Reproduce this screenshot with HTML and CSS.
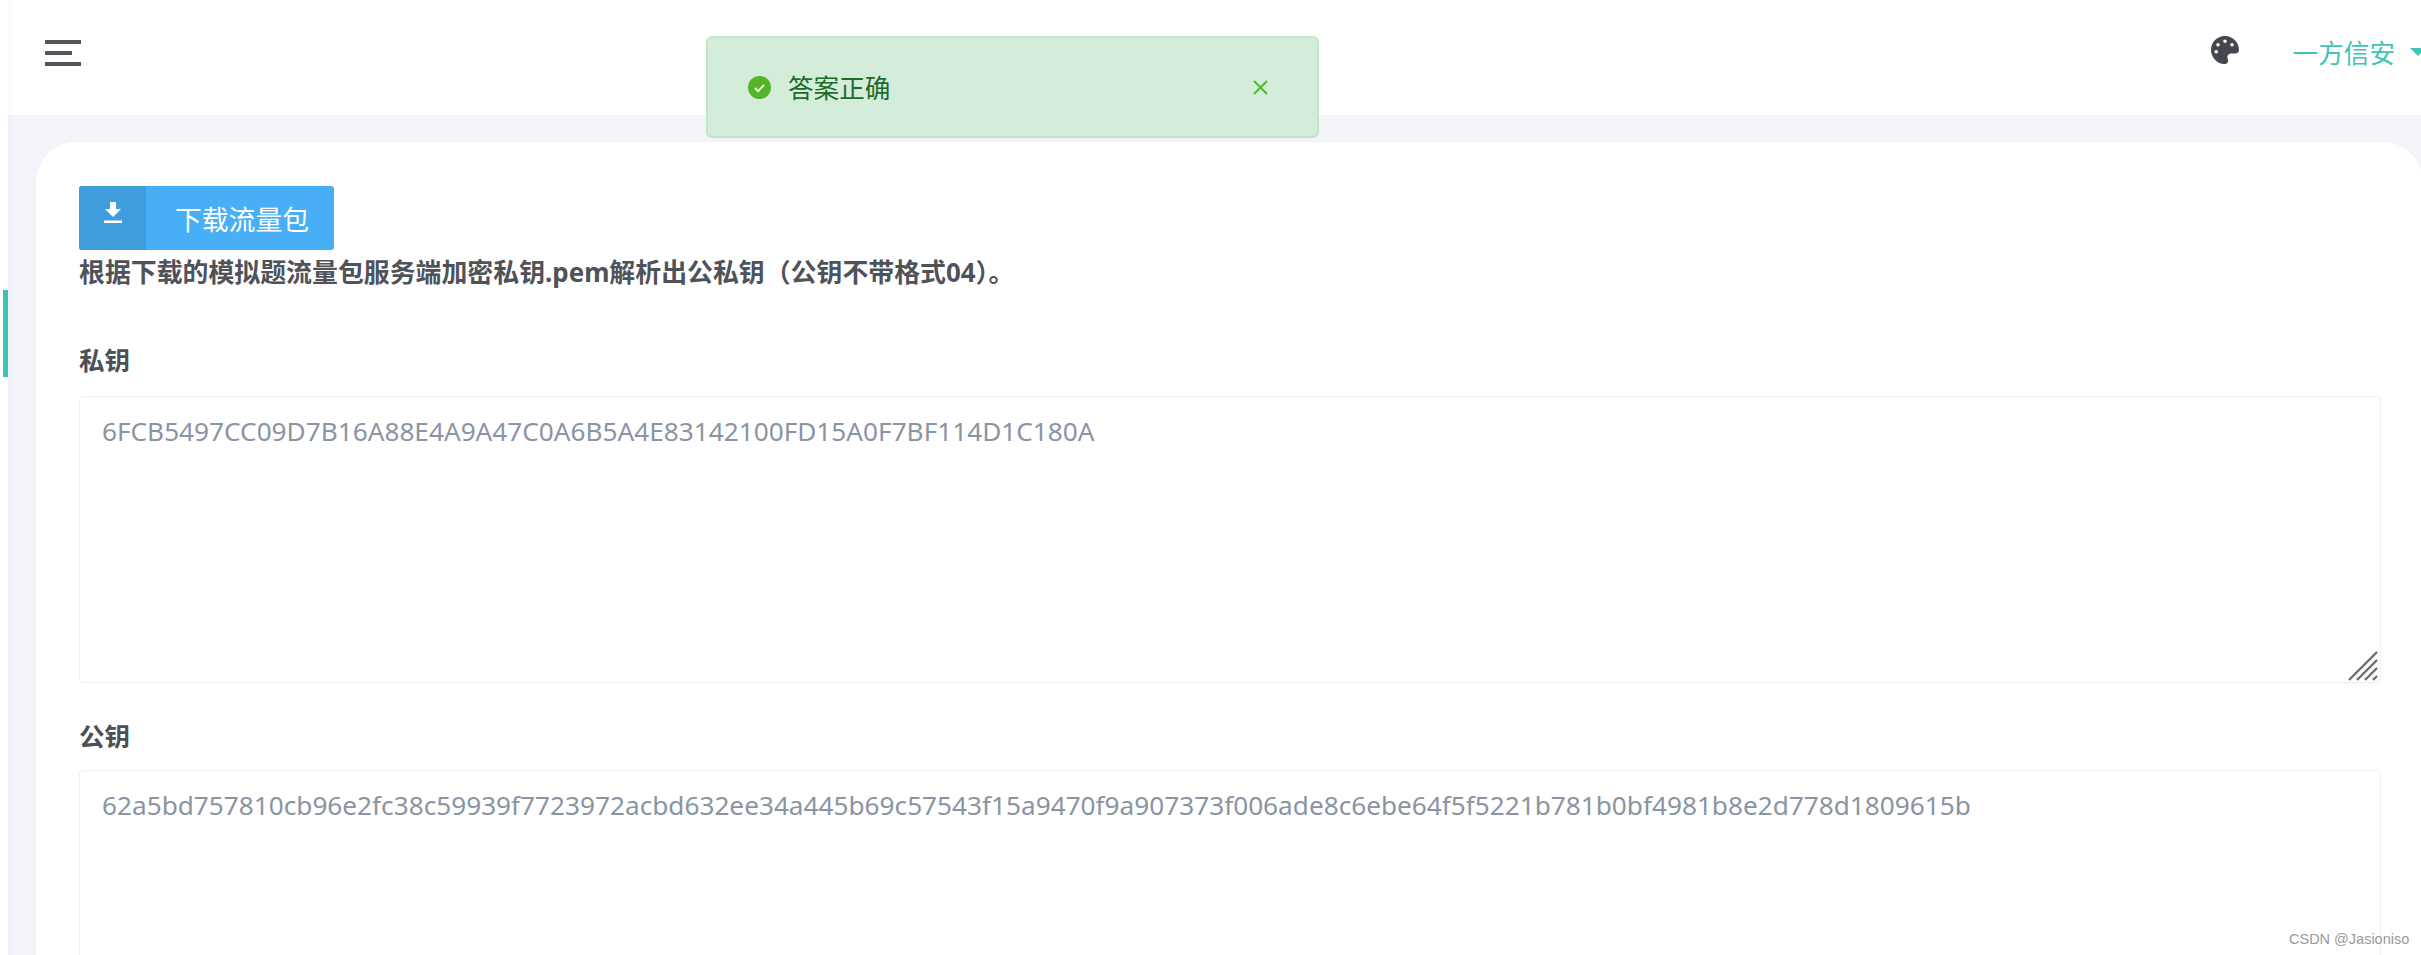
FILE: index.html
```html
<!DOCTYPE html>
<html lang="zh-CN">
<head>
    <meta charset="UTF-8">
    <meta name="viewport" content="width=device-width, initial-scale=1.0">
    <title>模拟题</title>
    <link rel="stylesheet" href="styles.css">
</head>
<body>
    <div class="app">
        <!-- collapsed sidebar -->
        <aside class="sidebar"><div class="sidebar-mark"></div></aside>

        <div class="main">
            <header class="topbar">
                <button type="button" class="hamburger" aria-label="menu">
                    <span></span>
                    <span class="short"></span>
                    <span></span>
                </button>
                <div class="topbar-right">
                    <svg class="palette" viewBox="0 0 512 512"><path d="M204.3 5C104.9 24.4 24.8 104.3 5.2 203.4c-37 187 131.7 326.4 258.8 306.7 41.2-6.4 61.4-54.6 42.5-91.7-23.1-45.4 9.9-98.4 60.9-98.4h79.7c35.8 0 64.8-29.6 64.9-65.3C511.5 97.1 368.1-26.9 204.3 5zM96 320c-17.7 0-32-14.3-32-32s14.3-32 32-32 32 14.3 32 32-14.3 32-32 32zm32-128c-17.7 0-32-14.3-32-32s14.3-32 32-32 32 14.3 32 32-14.3 32-32 32zm128-64c-17.7 0-32-14.3-32-32s14.3-32 32-32 32 14.3 32 32-14.3 32-32 32zm128 64c-17.7 0-32-14.3-32-32s14.3-32 32-32 32 14.3 32 32-14.3 32-32 32z"/></svg>
                    <span class="username">一方信安</span>
                    <span class="caret"></span>
                </div>
            </header>

            <div class="content">
                <section class="card">
                    <button type="button" class="download-btn">
                        <span class="download-icon">
                            <svg viewBox="0 0 18 21" width="18" height="21"><path d="M6 0h6v7h5l-8 8-8-8h5z"/><rect x="0" y="18.5" width="18" height="2.5"/></svg>
                        </span>
                        <span class="download-text">下载流量包</span>
                    </button>
                    <p class="question">根据下载的模拟题流量包服务端加密私钥.pem解析出公私钥（公钥不带格式04）。</p>

                    <label class="field-label first">私钥</label>
                    <div class="field">
                        <textarea class="field-input" spellcheck="false">6FCB5497CC09D7B16A88E4A9A47C0A6B5A4E83142100FD15A0F7BF114D1C180A</textarea>
                        <svg class="grip" viewBox="0 0 30 30" width="30" height="30"><path d="M1 29 29 1M9 29 29 9M17 29 29 17M25 29l4-4"/></svg>
                    </div>

                    <label class="field-label">公钥</label>
                    <div class="field">
                        <textarea class="field-input" spellcheck="false">62a5bd757810cb96e2fc38c59939f7723972acbd632ee34a445b69c57543f15a9470f9a907373f006ade8c6ebe64f5f5221b781b0bf4981b8e2d778d1809615b</textarea>
                    </div>
                </section>
            </div>
        </div>
    </div>

    <!-- message toast -->
    <div class="toast">
        <svg class="toast-icon" viewBox="0 0 23 23" width="23" height="23"><circle cx="11.5" cy="11.5" r="11.5"/><path d="M6.8 11.8l3.3 3.3 6-6.2"/></svg>
        <span class="toast-text">答案正确</span>
        <svg class="toast-close" viewBox="0 0 15 15" width="15" height="15"><path d="M1 1l13 13M14 1 1 14"/></svg>
    </div>

    <div class="watermark">CSDN @Jasioniso</div>
</body>
</html>
```

FILE: styles.css
```css
html, body { margin: 0; height: 955px; overflow: hidden; background: #fff; }
body { font-family: "Noto Sans", "Noto Sans CJK SC", sans-serif; color: #4b4f56; }
p { margin: 0; }

.app { display: flex; height: 955px; overflow: hidden; }

.sidebar { flex: 0 0 8px; box-sizing: border-box; padding: 290px 0 0 3px; background: #fff; box-shadow: 1px 0 4px rgba(0, 21, 41, .03); z-index: 1; }
.sidebar-mark { width: 5px; height: 87px; background: #3cc4b3; }

.main { flex: 1; min-width: 0; display: flex; flex-direction: column; }

.topbar { flex: 0 0 115px; box-sizing: border-box; display: flex; justify-content: space-between; background: #fff; }
.hamburger { display: flex; flex-direction: column; justify-content: space-between; width: 36px; height: 26px; margin: 40px 0 0 37px; padding: 0; background: none; border: none; }
.hamburger span { display: block; width: 36px; height: 4px; background: #53575c; }
.hamburger .short { width: 27px; }

.topbar-right { display: flex; align-items: flex-start; margin-right: -5px; }
.palette { width: 28px; height: 28px; margin-top: 36px; fill: #44474e; }
.username { margin: 34px 0 0 54px; font-size: 25.6px; line-height: 40px; color: #3fc3b3; }
.caret { margin: 48px 0 0 15px; border-left: 8px solid transparent; border-right: 8px solid transparent; border-top: 8px solid #3fc3b3; }

.content { flex: 1; min-height: 0; overflow: hidden; background: #f2f4f9; padding: 27px 0 0 28px; }

.card { box-sizing: border-box; height: 100%; overflow: hidden; margin-right: -2px; padding: 44px 42px 0 43px; background: #fff; border-radius: 40px 40px 0 0; }

.download-btn { display: flex; width: 255px; height: 64px; padding: 0; background: #48aff6; border: none; border-radius: 3px; color: #fff; overflow: hidden; font-family: inherit; }
.download-icon { flex: 0 0 67px; height: 64px; box-sizing: border-box; padding-top: 16px; background: #3f9ddd; text-align: center; }
.download-icon svg { fill: #fff; }
.download-text { margin-left: 29px; font-size: 26.8px; line-height: 68px; }

.question { font-size: 25.9px; font-weight: 700; line-height: 44px; color: #4f5359; }

.field-label { display: block; margin: 31px 0 12px; font-size: 25.5px; font-weight: 700; line-height: 44px; }
.field-label.first { margin: 44px 0 14px; }

.field { position: relative; height: 287px; }
.field-input { display: block; box-sizing: border-box; width: 100%; height: 100%; padding: 12px 22px; border: 1px solid #f0f0f1; border-radius: 4px; outline: none; resize: none; font-family: inherit; font-size: 26.2px; line-height: 44px; color: #8a94a3; background: #fff; }

.grip { position: absolute; right: 3px; bottom: 2px; fill: none; stroke: #6e6e6e; stroke-width: 2.4; }

.toast { position: absolute; left: 706px; top: 36px; box-sizing: border-box; width: 613px; height: 102px; display: flex; align-items: center; padding: 0 49px 0 40px; background: #d4ecda; border: 2px solid #c1e5c7; border-radius: 6px; }
.toast-icon circle { fill: #52b52a; }
.toast-icon path { fill: none; stroke: #fff; stroke-width: 1.8; }
.toast-text { margin-left: 17px; flex: 1; font-size: 25.6px; color: #1f6b2a; }
.toast-close { fill: none; stroke: #52b52a; stroke-width: 1.8; }

.watermark { position: absolute; left: 2289px; top: 930px; font-family: "Liberation Sans", sans-serif; font-size: 14.5px; line-height: 18px; color: #9a9a9a; }
```
